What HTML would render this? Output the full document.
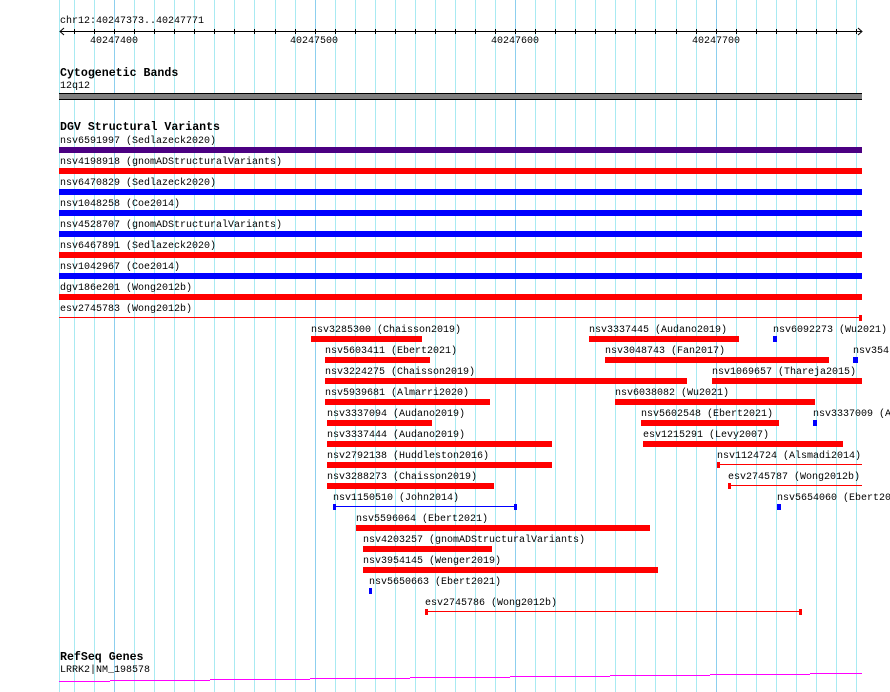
<!DOCTYPE html>
<html><head><meta charset="utf-8"><style>
html,body{margin:0;padding:0;background:#fff;width:890px;height:692px;overflow:hidden}
body{position:relative;font-family:"Liberation Mono",monospace;font-size:10px;color:#000}
.a{position:absolute}
.t{position:absolute;white-space:nowrap;line-height:11px;font-size:10px}
.h{position:absolute;white-space:nowrap;font-weight:bold;font-size:11.6px;line-height:12px}
</style></head><body>
<div id="g"></div>
<div class="t" style="left:60px;top:16px">chr12:40247373..40247771</div>
<div class="a" style="left:60px;top:31px;width:801px;height:1px;background:#000"></div>
<svg class="a" style="left:58px;top:27px" width="806" height="10"><path d="M6 1L2 4.5L6 8M800 1L804 4.5L800 8" stroke="#000" fill="none"/></svg>
<div class="h" style="left:60px;top:68px">Cytogenetic Bands</div>
<div class="t" style="left:60px;top:81px">12q12</div>
<div class="a" style="left:59px;top:93px;width:803px;height:5px;background:#808080;border-top:1px solid #000;border-bottom:1px solid #000"></div>
<div class="h" style="left:60px;top:122px">DGV Structural Variants</div>
<div class="h" style="left:60px;top:652px">RefSeq Genes</div>
<div class="t" style="left:60px;top:665px">LRRK2|NM_198578</div>
<div id="f"></div>
<script>
var g='';
for(var k=0;k<40;k++){var x=Math.round(74+20.05*k);if(x>858)break;var maj=(k%10==2);
g+='<div class="a" style="left:'+x+'px;top:0;width:1px;height:692px;background:'+(maj?'#8ccfee':'#a8eaf2')+'"></div>';
g+='<div class="a" style="left:'+x+'px;top:29px;width:1px;height:5px;background:#000"></div>';}
g+='<div class="a" style="left:59px;top:0;width:1px;height:692px;background:#a8eaf2"></div>';
['40247400',114,'40247500',314,'40247600',515,'40247700',716].forEach(function(v,i,a){if(i%2==0)g+='<div class="t" style="left:'+(a[i+1]-24)+'px;top:36px">'+v+'</div>';});
document.getElementById('g').innerHTML=g;
var R='#f00',B='#00f',P='#4b0082',o='';
function bar(x1,x2,y,c){o+='<div class="a" style="left:'+x1+'px;top:'+y+'px;width:'+(x2-x1)+'px;height:6px;background:'+c+'"></div>';}
function lbl(x,y,s){o+='<div class="t" style="left:'+x+'px;top:'+y+'px">'+s+'</div>';}
function line(x1,x2,y,c,t1,t2){o+='<div class="a" style="left:'+x1+'px;top:'+(y+2)+'px;width:'+(x2-x1)+'px;height:1px;background:'+c+'"></div>';if(t1)bar(x1,x1+3,y,c);if(t2)bar(x2-3,x2,y,c);}
var TR=[['nsv6591997 (Sedlazeck2020)',P],['nsv4198918 (gnomADStructuralVariants)',R],['nsv6470829 (Sedlazeck2020)',B],['nsv1048258 (Coe2014)',B],['nsv4528707 (gnomADStructuralVariants)',B],['nsv6467891 (Sedlazeck2020)',R],['nsv1042967 (Coe2014)',B],['dgv186e201 (Wong2012b)',R]];
TR.forEach(function(r,i){var y=147+21*i;lbl(60,y-11,r[0]);bar(59,862,y,r[1]);});
lbl(60,304,'esv2745783 (Wong2012b)');line(59,862,315,R,0,1);
var F=[
[0,311,422,'nsv3285300 (Chaisson2019)','b',R],[0,589,739,'nsv3337445 (Audano2019)','b',R],[0,773,777,'nsv6092273 (Wu2021)','b',B],
[1,325,430,'nsv5603411 (Ebert2021)','b',R],[1,605,829,'nsv3048743 (Fan2017)','b',R],[1,853,858,'nsv354','b',B],
[2,325,687,'nsv3224275 (Chaisson2019)','b',R],[2,712,862,'nsv1069657 (Thareja2015)','b',R],
[3,325,490,'nsv5939681 (Almarri2020)','b',R],[3,615,815,'nsv6038082 (Wu2021)','b',R],
[4,327,432,'nsv3337094 (Audano2019)','b',R],[4,641,779,'nsv5602548 (Ebert2021)','b',R],[4,813,817,'nsv3337009 (A','b',B],
[5,327,552,'nsv3337444 (Audano2019)','b',R],[5,643,843,'esv1215291 (Levy2007)','b',R],
[6,327,552,'nsv2792138 (Huddleston2016)','b',R],[6,717,862,'nsv1124724 (Alsmadi2014)','l1',R],
[7,327,494,'nsv3288273 (Chaisson2019)','b',R],[7,728,862,'esv2745787 (Wong2012b)','l1',R],
[8,333,517,'nsv1150510 (John2014)','l2',B],[8,777,781,'nsv5654060 (Ebert2021)','b',B],
[9,356,650,'nsv5596064 (Ebert2021)','b',R],
[10,363,492,'nsv4203257 (gnomADStructuralVariants)','b',R],
[11,363,658,'nsv3954145 (Wenger2019)','b',R],
[12,369,372,'nsv5650663 (Ebert2021)','b',B],
[13,425,802,'esv2745786 (Wong2012b)','l2',R]];
F.forEach(function(f){var y=336+21*f[0];lbl(f[1],y-11,f[3]);if(f[4]=='b')bar(f[1],f[2],y,f[5]);else line(f[1],f[2],y,f[5],1,f[4]=='l2');});
var m='';for(var s=0;s<9;s++){var x1=s==0?59:110+100*(s-1),x2=110+100*s;if(x2>862)x2=862;m+='<div class="a" style="left:'+x1+'px;top:'+(681-s)+'px;width:'+(x2-x1)+'px;height:1px;background:#f0f"></div>';}
o+=m;
document.getElementById('f').innerHTML=o;
</script>
</body></html>
